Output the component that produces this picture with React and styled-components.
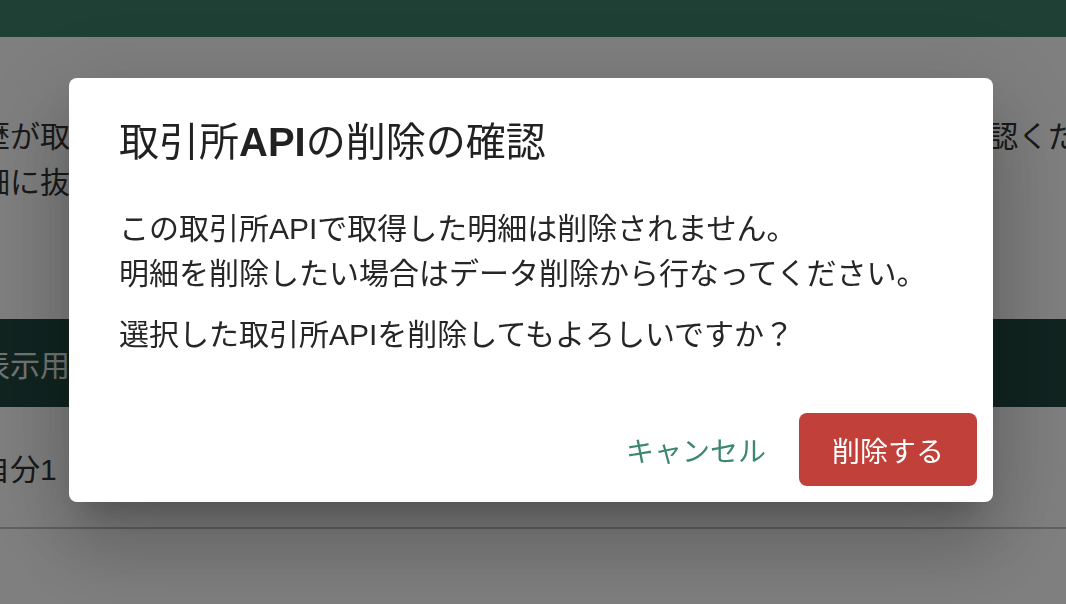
import React from 'react';
import styled, { createGlobalStyle } from 'styled-components';

const GlobalStyle = createGlobalStyle`
  html, body { margin: 0; padding: 0; height: 100%; }
  body {
    background: #fff;
    font-family: "Liberation Sans", "Noto Sans CJK JP", sans-serif;
    overflow: hidden;
  }
  #root { height: 100%; }
`;

const Page = styled.div`
  height: 604px;
  display: flex;
  flex-direction: column;
  background: #fff;
  overflow: hidden;
`;

const AppBar = styled.header`
  height: 37px;
  flex-shrink: 0;
  background: #3e806a;
`;

const Content = styled.main`
  margin-left: -110px;
  padding-top: 77px;
  white-space: nowrap;
`;

const Notice = styled.p`
  margin: 0;
  font-size: 30px;
  line-height: 46px;
  color: #333;
`;

const Table = styled.div`
  margin-top: 113px;
  display: flex;
  flex-direction: column;
`;

const HeadRow = styled.div`
  height: 88px;
  display: flex;
  align-items: center;
  padding-left: 90px;
  background: #214840;
  color: #e6ebe9;
  font-size: 30px;
`;

const BodyRow = styled.div`
  height: 120px;
  display: flex;
  align-items: center;
  padding-left: 90px;
  border-bottom: 2px solid #c2c2c2;
  color: #333;
  font-size: 30px;
`;

const Backdrop = styled.div`
  position: fixed;
  inset: 0;
  background: rgba(0, 0, 0, 0.5);
  display: flex;
  align-items: center;
  justify-content: center;
  padding: 0 4px 24px 0;
  box-sizing: border-box;
`;

const Dialog = styled.div`
  width: 924px;
  background: #fff;
  border-radius: 8px;
  box-shadow: 0 22px 30px -14px rgba(0, 0, 0, 0.2),
    0 48px 76px 6px rgba(0, 0, 0, 0.14),
    0 18px 92px 16px rgba(0, 0, 0, 0.12);
  display: flex;
  flex-direction: column;
`;

const Title = styled.h2`
  margin: 0;
  padding: 32px 48px 32px 50px;
  font-size: 40px;
  line-height: 64px;
  font-weight: 400;
  color: rgba(0, 0, 0, 0.87);
`;

const Latin = styled.span`
  font-weight: 700;
`;

const Body = styled.div`
  padding: 0 48px 40px 50px;
`;

const Text = styled.p`
  margin: 0;
  font-size: 30px;
  line-height: 45px;
  color: #262626;
  & + & { margin-top: 16px; }
`;

const Actions = styled.div`
  display: flex;
  justify-content: flex-end;
  align-items: center;
  gap: 17px;
  padding: 16px;
`;

const Button = styled.button`
  height: 73px;
  border: none;
  border-radius: 8px;
  font-family: inherit;
  font-size: 28px;
  cursor: pointer;
  padding: ${(p) => (p.$danger ? '0 33px' : '0 16px')};
  background: ${(p) => (p.$danger ? '#c1403a' : 'transparent')};
  color: ${(p) => (p.$danger ? '#fff' : '#3d8770')};
`;

export default function App() {
  return (
    <>
      <GlobalStyle />
      <Page>
        <AppBar />
        <Content>
          <Notice>
            取引履歴が取得できない場合は、取引所のAPIキーの権限と有効期限を今一度ご確認ください。
            <br />
            取引明細に抜け漏れがある場合は、再度取得してください。
          </Notice>
          <Table>
            <HeadRow>表示用名</HeadRow>
            <BodyRow>自分1</BodyRow>
          </Table>
        </Content>
      </Page>
      <Backdrop>
        <Dialog role="dialog">
          <Title>
            取引所<Latin>API</Latin>の削除の確認
          </Title>
          <Body>
            <Text>
              この取引所APIで取得した明細は削除されません。
              <br />
              明細を削除したい場合はデータ削除から行なってください。
            </Text>
            <Text>選択した取引所APIを削除してもよろしいですか？</Text>
          </Body>
          <Actions>
            <Button>キャンセル</Button>
            <Button $danger>削除する</Button>
          </Actions>
        </Dialog>
      </Backdrop>
    </>
  );
}
